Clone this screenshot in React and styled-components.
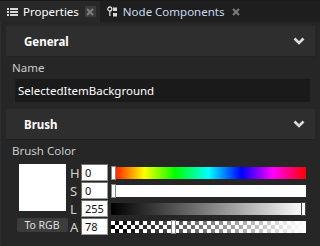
import React from "react";
import styled, { createGlobalStyle } from "styled-components";

const GlobalStyle = createGlobalStyle`
  html, body {
    margin: 0;
    padding: 0;
    background: #262626;
    font-family: "Noto Sans", "Open Sans", sans-serif;
    font-size: 11px;
  }
`;

const TabBar = styled.div`
  display: flex;
  height: 22px;
  background: #1e1e1e;
  border-top: 1px solid #1a1a1a;
  box-sizing: border-box;
`;

const Tab = styled.div`
  display: flex;
  align-items: center;
  gap: 5px;
  padding: 0 4px 0 7px;
  background: ${(p) => (p.active ? "#282828" : "transparent")};
  color: ${(p) => (p.active ? "#ffffff" : "#c8dcf0")};
  font-size: 11.5px;
  white-space: nowrap;
`;

const Close = styled.span`
  display: flex;
  align-items: center;
  justify-content: center;
  width: 11px;
  height: 11px;
  margin-left: 1px;
  background: ${(p) => (p.active ? "#3a3a3a" : "transparent")};
`;

const Content = styled.div`
  padding: 4px 5px 0 5px;
  background: #262626;
  height: 224px;
  box-sizing: border-box;
  border-left: 1px solid #2e2e2e;
`;

const SectionHeader = styled.div`
  display: flex;
  align-items: center;
  justify-content: space-between;
  height: 30px;
  padding: 0 10px 0 18px;
  background: #2e2e2e;
  border-bottom: 1px solid #222;
  color: #ffffff;
  font-weight: bold;
  font-size: 11.5px;
`;

const Label = styled.div`
  color: #c9ccd0;
  font-size: 11.5px;
  padding-left: 6px;
  margin-top: 3px;
  line-height: 16px;
`;

const TextBox = styled.div`
  margin: 3px 5px 7px 9px;
  height: 23px;
  background: #1a1a1a;
  color: #ffffff;
  padding-left: 3px;
  display: flex;
  align-items: center;
  font-size: 11.5px;
`;

const ColorEditor = styled.div`
  display: flex;
  gap: 2px;
  margin-top: 5px;
  padding-left: 10px;
`;

const Preview = styled.div`
  display: flex;
  flex-direction: column;
  align-items: center;
  gap: 7px;
  width: 52px;
`;

const Swatch = styled.div`
  width: 47px;
  height: 47px;
  background: #ffffff;
`;

const ModeButton = styled.div`
  width: 51px;
  height: 14px;
  border-radius: 2px;
  background: #3c3c3c;
  color: #e0e0e0;
  font-size: 10.5px;
  display: flex;
  align-items: center;
  justify-content: center;
`;

const Channels = styled.div`
  display: flex;
  flex-direction: column;
  gap: 1px;
`;

const ChannelRow = styled.div`
  display: flex;
  align-items: center;
  height: 17px;
`;

const ChannelLetter = styled.span`
  width: 11px;
  color: #d0d0d0;
  font-size: 13px;
`;

const NumberBox = styled.div`
  width: 27px;
  height: 17px;
  box-sizing: border-box;
  background: #ffffff;
  border: 1px solid #9a9a9a;
  border-top-color: #6e6e6e;
  border-left-color: #6e6e6e;
  color: #101010;
  font-size: 11px;
  padding-left: 3px;
  line-height: 15px;
`;

const Rail = styled.div`
  position: relative;
  margin-left: 3px;
  width: 195px;
  height: 12px;
  background: ${(p) => p.bg};
  background-size: ${(p) => p.size || "auto"};
`;

const Thumb = styled.div`
  position: absolute;
  top: 0;
  width: 3px;
  height: 12px;
  background: #ffffff;
  border: 1px solid ${(p) => p.edge || "#888"};
  box-sizing: content-box;
  margin-top: -1px;
`;

const Chevron = () => (
  <svg width="12" height="8" viewBox="0 0 12 8">
    <path d="M1.5 1.5 L6 6 L10.5 1.5" fill="none" stroke="#dcdcdc" strokeWidth="2.6" />
  </svg>
);

const ListIcon = () => (
  <svg width="11" height="10" viewBox="0 0 11 10">
    <g fill="#d8d8d8">
      <rect x="0" y="1" width="2" height="2" />
      <rect x="3" y="1" width="8" height="2" />
      <rect x="0" y="4" width="2" height="2" />
      <rect x="3" y="4" width="8" height="2" />
      <rect x="0" y="7" width="2" height="2" />
      <rect x="3" y="7" width="8" height="2" />
    </g>
  </svg>
);

const NodeIcon = () => (
  <svg width="11" height="12" viewBox="0 0 11 12">
    <circle cx="2.8" cy="3" r="2" fill="none" stroke="#d8d8d8" strokeWidth="1.3" />
    <rect x="2.2" y="5" width="1.3" height="5" fill="#d8d8d8" />
    <rect x="6" y="1.5" width="4" height="3.5" fill="#d8d8d8" />
    <rect x="6" y="7" width="4" height="3.5" fill="#d8d8d8" />
  </svg>
);

const CloseX = () => (
  <svg width="8" height="8" viewBox="0 0 8 8">
    <path d="M1 1 L7 7 M7 1 L1 7" stroke="#7d7d7d" strokeWidth="2" />
  </svg>
);

const hue =
  "linear-gradient(to right, #ff0000, #ffff00 17%, #00ff00 33%, #00ffff 50%, #0000ff 67%, #ff00ff 83%, #ff0000)";
const checker =
  "linear-gradient(to right, rgba(255,255,255,0), #ffffff), conic-gradient(#000 25%, #fff 0 50%, #000 0 75%, #fff 0)";

const channels = [
  { key: "H", value: 0, max: 360, bg: hue },
  { key: "S", value: 0, max: 255, bg: "#ffffff" },
  { key: "L", value: 255, max: 255, bg: "linear-gradient(to right, #000000, #ffffff)", edge: "#444" },
  { key: "A", value: 78, max: 255, bg: checker, size: "100% 100%, 8px 8px" },
];

export default function App() {
  return (
    <>
      <GlobalStyle />
      <TabBar>
        <Tab active>
          <ListIcon />
          Properties
          <Close active>
            <CloseX />
          </Close>
        </Tab>
        <Tab>
          <NodeIcon />
          Node Components
          <Close>
            <CloseX />
          </Close>
        </Tab>
      </TabBar>
      <Content>
        <SectionHeader>
          General
          <Chevron />
        </SectionHeader>
        <Label>Name</Label>
        <TextBox>SelectedItemBackground</TextBox>
        <SectionHeader>
          Brush
          <Chevron />
        </SectionHeader>
        <Label>Brush Color</Label>
        <ColorEditor>
          <Preview>
            <Swatch />
            <ModeButton>To RGB</ModeButton>
          </Preview>
          <Channels>
            {channels.map((c) => (
              <ChannelRow key={c.key}>
                <ChannelLetter>{c.key}</ChannelLetter>
                <NumberBox>{c.value}</NumberBox>
                <Rail bg={c.bg} size={c.size}>
                  <Thumb
                    edge={c.edge}
                    style={{ left: Math.min((c.value / c.max) * 195, 190) }}
                  />
                </Rail>
              </ChannelRow>
            ))}
          </Channels>
        </ColorEditor>
      </Content>
    </>
  );
}
